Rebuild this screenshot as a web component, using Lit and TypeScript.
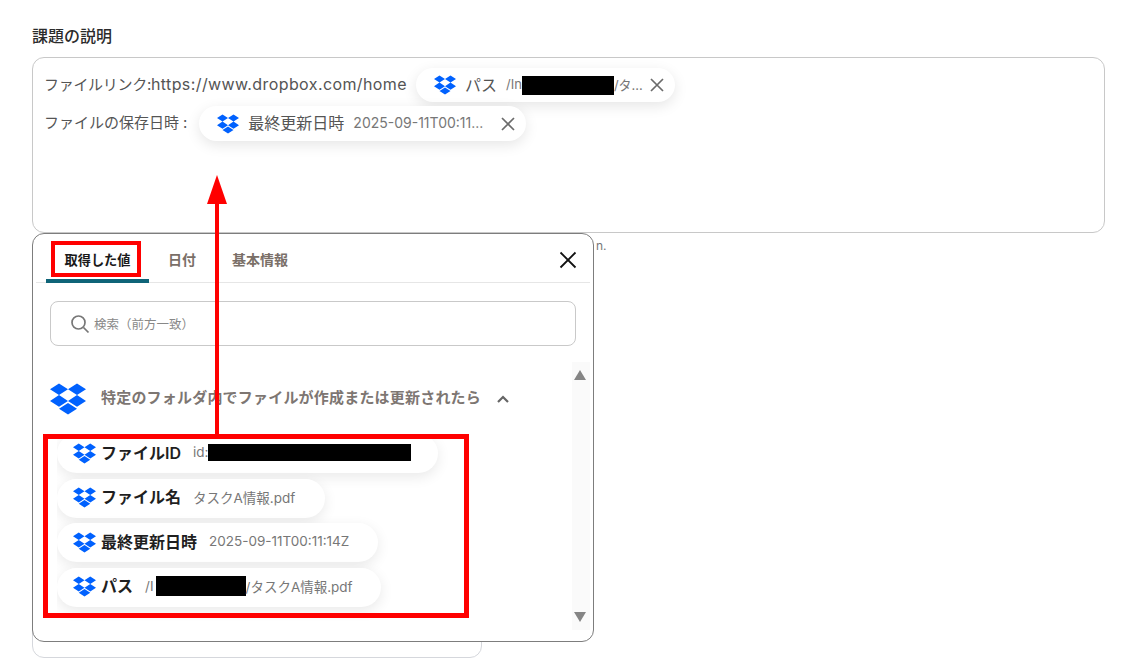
import { LitElement, html, css, svg } from "lit";
import { customElement } from "lit/decorators.js";

const dropbox = svg`<path fill="#0061fe" d="M6 1.6 0 5.5l6 3.9 6-3.9zM18 1.6l-6 3.9 6 3.9 6-3.9zM0 13.3l6 3.9 6-3.9-6-3.9zM18 9.4l-6 3.9 6 3.9 6-3.9zM6 18.5l6 3.9 6-3.9-6-3.9z"/>`;
const dbx = (cls: string) => html`<svg class=${cls} viewBox="0 0 24 24">${dropbox}</svg>`;
const closeIcon = html`<svg class="x" viewBox="0 0 14 14"><path d="M1 1l12 12M13 1 1 13" fill="none" stroke="#6b6b6b" stroke-width="1.7"/></svg>`;

@customElement("app-root")
export class AppRoot extends LitElement {
  static styles = css`
    :host { display: block; width: 1136px; height: 662px; position: relative; overflow: hidden; background: #fff;
      font-family: Inter, "Noto Sans CJK JP", sans-serif; color: #333; }
    .page { padding: 27px 31px 0 32px; display: flex; flex-direction: column; }
    .label { font-size: 16px; font-weight: 500; line-height: 18px; color: #2b2b2b; margin-bottom: 12px; }
    .box { height: 176px; box-sizing: border-box; border: 1px solid #c8c8c8; border-radius: 12px; padding: 10px 11px; font-size: 15px; color: #555; }
    .row { display: flex; align-items: center; height: 34px; margin-bottom: 4px; white-space: nowrap; }
    .row.tall { height: 35px; }
    .t { position: relative; top: -2px; }
    .kana { letter-spacing: -.3px; }
    .url { font-size: 16px; letter-spacing: .4px; }
    .colon { margin-left: 4px; }
    .chip { display: inline-flex; align-items: center; height: 34px; border-radius: 17px; background: #fff; box-shadow: 0 4px 14px rgba(0,0,0,.1); box-sizing: border-box; white-space: nowrap; }
    .top1 { margin-left: 9px; width: 259px; padding-left: 18px; }
    .top2 { margin-left: 12px; width: 327px; padding-left: 18px; height: 35px; border-radius: 18px; }
    .ticon { width: 22px; height: 22px; flex: none; }
    .tname { font-size: 16px; color: #555; margin: 0 0 3px 9px; }
    .tval { font-size: 14px; color: #777; margin: 0 0 2px 9px; display: flex; align-items: center; }
    .top1 .tval { font-size: 13px; }
    .tval .redact { margin-top: 2px; }
    .x { width: 14px; height: 14px; margin-left: auto; margin-right: 11px; flex: none; }
    .redact { display: inline-block; background: #000; flex: none; }
    .help { font-size: 12px; line-height: 16px; color: #777; padding-left: 564px; margin-top: 5px; }
    .under { width: 450px; height: 404px; margin-top: 0; box-sizing: border-box; border: 1px solid #d5d7dc; border-radius: 0 0 12px 12px; }

    .panel { position: absolute; left: 32px; top: 233px; width: 562px; height: 409px; box-sizing: border-box; background: #fff;
      border: 1px solid #7d7d7d; border-radius: 12px; display: flex; flex-direction: column; overflow: hidden; }
    .tabs { display: flex; align-items: stretch; height: 48px; margin: 0 3px; border-bottom: 1px solid #e6e6e6; position: relative; flex: none; }
    .tab { font-size: 14px; font-weight: 600; color: #7a6f68; display: flex; align-items: center; padding-top: 1px; }
    .tab.on { font-size: 13.2px; color: #1a1a1a; width: 103px; margin-left: 10px; justify-content: center; font-weight: 700; border-bottom: 4px solid #0f6478; box-sizing: border-box; height: 49px; padding-top: 5px; border-radius: 3px 3px 0 0; }
    .tab.b { margin-left: 19px; }
    .tab.c { margin-left: 36px; }
    .close { position: absolute; right: 13px; top: 17px; width: 18px; height: 18px; }
    .search { margin: 18px 17px 0; height: 45px; box-sizing: border-box; border: 1px solid #c9c9c9; border-radius: 8px; display: flex; align-items: center; padding-left: 19px; flex: none; }
    .search svg { width: 20px; height: 20px; flex: none; }
    .search span { font-size: 12.5px; color: #888; margin-left: 4px; }
    .body { flex: 1; display: flex; min-height: 0; margin-top: 16px; position: relative; }
    .main { flex: 1; min-width: 0; overflow: hidden; }
    .head { display: flex; align-items: center; height: 36px; margin: 19px 0 0 17px; }
    .hicon { width: 36px; height: 36px; flex: none; }
    .htext { font-size: 15px; font-weight: 600; color: #7d7672; margin: 0 0 6px 15px; letter-spacing: .2px; white-space: nowrap; }
    .chev { width: 14px; height: 10px; margin-left: 15px; flex: none; }
    .list { height: 187px; overflow: hidden; margin: 17px 0 0 24px; display: flex; flex-direction: column; gap: 5.5px; align-items: flex-start; }
    .ichip { height: 39px; flex: none; padding-left: 16px; box-shadow: 0 4px 14px rgba(0,0,0,.09); border-radius: 19.5px; }
    .ichip .ticon { width: 23px; height: 23px; margin-bottom: 1px; }
    .iname { font-size: 16px; font-weight: 600; color: #1f1f1f; margin: 0 0 4px 5px; }
    .ival { font-size: 13.5px; color: #777; margin: 0 0 3px 12px; display: flex; align-items: center; }
    .r4 { margin-left: 2px; }
    .scroll { width: 18px; margin-right: 3px; background: #fafafa; position: relative; flex: none; height: 268px; }
    .tri { position: absolute; left: 2px; width: 0; height: 0; border-left: 6.5px solid transparent; border-right: 6.5px solid transparent; }
    .tri.up { top: 8px; border-bottom: 10px solid #858585; }
    .tri.down { bottom: 8px; border-top: 10px solid #858585; }

    .mark { position: absolute; border: 4px solid #f00; box-sizing: border-box; pointer-events: none; }
    .m1 { left: 51px; top: 241px; width: 90px; height: 36px; }
    .m2 { left: 43px; top: 434px; width: 426px; height: 184px; border-width: 5px; }
    .stem { position: absolute; left: 215px; top: 200px; width: 4px; height: 234px; background: #f00; }
    .head-arrow { position: absolute; left: 207px; top: 175px; width: 0; height: 0; border-left: 10.5px solid transparent; border-right: 10.5px solid transparent; border-bottom: 29px solid #f00; }
  `;

  render() {
    return html`
      <div class="page">
        <div class="label">課題の説明</div>
        <div class="box">
          <div class="row">
            <span class="t"><span class="kana">ファイルリンク:</span><span class="url">https://www.dropbox.com/home</span></span>
            <span class="chip top1">
              ${dbx("ticon")}<span class="tname">パス</span>
              <span class="tval">/In<i class="redact" style="width:92px;height:19px"></i>/タ...</span>
              ${closeIcon}
            </span>
          </div>
          <div class="row tall">
            <span class="t">ファイルの保存日時<span class="colon">:</span></span>
            <span class="chip top2">
              ${dbx("ticon")}<span class="tname">最終更新日時</span>
              <span class="tval">2025-09-11T00:11...</span>
              ${closeIcon}
            </span>
          </div>
        </div>
        <div class="help">n.</div>
        <div class="under"></div>
      </div>

      <div class="panel">
        <div class="tabs">
          <div class="tab on">取得した値</div>
          <div class="tab b">日付</div>
          <div class="tab c">基本情報</div>
          <svg class="close" viewBox="0 0 18 18"><path d="M1.5 1.5l15 15M16.5 1.5l-15 15" fill="none" stroke="#111" stroke-width="1.8"/></svg>
        </div>
        <div class="search">
          <svg viewBox="0 0 20 20"><circle cx="8.5" cy="8.5" r="6.5" fill="none" stroke="#777" stroke-width="1.7"/><path d="M13.5 13.5l5 5" stroke="#777" stroke-width="1.7" fill="none"/></svg>
          <span>検索（前方一致）</span>
        </div>
        <div class="body">
          <div class="main">
            <div class="head">
              ${dbx("hicon")}
              <span class="htext">特定のフォルダ内でファイルが作成または更新されたら</span>
              <svg class="chev" viewBox="0 0 14 10"><path d="M2 8l5-5 5 5" fill="none" stroke="#666" stroke-width="2.2"/></svg>
            </div>
            <div class="list">
              <div class="chip ichip" style="width:381px">${dbx("ticon")}<span class="iname">ファイルID</span><span class="ival">id:<i class="redact" style="width:203px;height:17px"></i></span></div>
              <div class="chip ichip" style="width:268px">${dbx("ticon")}<span class="iname">ファイル名</span><span class="ival">タスクA情報.pdf</span></div>
              <div class="chip ichip" style="width:321px">${dbx("ticon")}<span class="iname">最終更新日時</span><span class="ival">2025-09-11T00:11:14Z</span></div>
              <div class="chip ichip" style="width:324px">${dbx("ticon")}<span class="iname">パス</span><span class="ival">/I<i class="redact r4" style="width:90px;height:20px"></i>/タスクA情報.pdf</span></div>
            </div>
          </div>
          <div class="scroll"><div class="tri up"></div><div class="tri down"></div></div>
        </div>
      </div>

      <div class="mark m1"></div>
      <div class="mark m2"></div>
      <div class="stem"></div>
      <div class="head-arrow"></div>
    `;
  }
}
